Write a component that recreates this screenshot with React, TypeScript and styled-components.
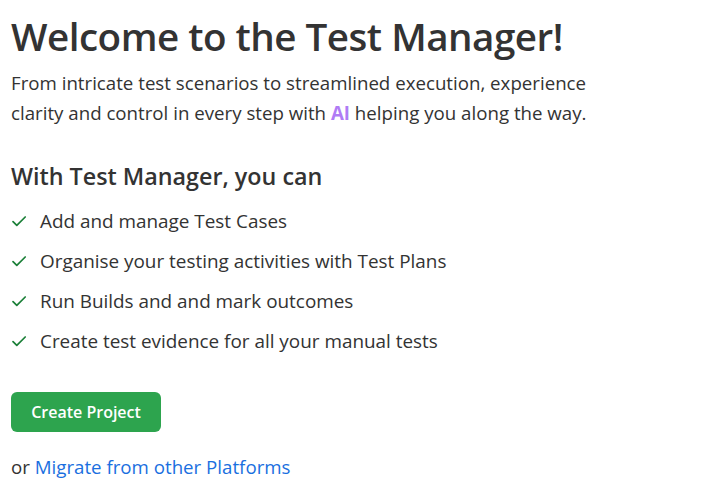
import styled, { createGlobalStyle } from "styled-components";

const GlobalStyle = createGlobalStyle`
  body {
    margin: 0;
    background: #ffffff;
    font-family: "Open Sans", "Noto Sans", sans-serif;
    color: #333333;
  }
`;

const Page = styled.div`
  padding: 10px 11px;
`;

const Title = styled.h1`
  margin: 0;
  font-size: 38.6px;
  font-weight: 600;
  line-height: 52px;
  letter-spacing: -0.5px;
  color: #333333;
`;

const Intro = styled.p`
  margin: 6px 0 0;
  font-size: 18.7px;
  line-height: 30px;
  max-width: 620px;
`;

const Ai = styled.span`
  color: #b07cf5;
  font-weight: 700;
`;

const SubTitle = styled.h2`
  margin: 32px 0 0;
  font-size: 23.3px;
  font-weight: 600;
  line-height: 32px;
`;

const List = styled.ul`
  list-style: none;
  margin: 9px 0 0;
  padding: 0;
`;

const Item = styled.li`
  display: flex;
  align-items: center;
  gap: 13px;
  height: 40px;
  font-size: 18.9px;
`;

const Check = styled.svg`
  width: 16px;
  height: 16px;
  flex: none;
  color: #1a7f37;
`;

const Button = styled.button`
  margin-top: 31px;
  display: block;
  width: 150px;
  height: 40px;
  border: none;
  border-radius: 6px;
  background: #2da44e;
  color: #ffffff;
  font-family: inherit;
  font-size: 16px;
  font-weight: 600;
  cursor: pointer;
`;

const Footer = styled.p`
  margin: 22px 0 0;
  font-size: 18.7px;
`;

const Link = styled.a`
  color: #1a6fe0;
  text-decoration: none;
`;

const items = [
  "Add and manage Test Cases",
  "Organise your testing activities with Test Plans",
  "Run Builds and and mark outcomes",
  "Create test evidence for all your manual tests",
];

const CheckIcon = () => (
  <Check viewBox="0 0 16 16" fill="none">
    <path
      d="M2 8.6l3.8 3.8L14.2 4"
      stroke="currentColor"
      strokeWidth="1.7"
      strokeLinecap="round"
      strokeLinejoin="round"
    />
  </Check>
);

export default function App() {
  return (
    <>
      <GlobalStyle />
      <Page>
        <Title>Welcome to the Test Manager!</Title>
        <Intro>
          From intricate test scenarios to streamlined execution, experience
          clarity and control in every step with <Ai>AI</Ai> helping you along
          the way.
        </Intro>
        <SubTitle>With Test Manager, you can</SubTitle>
        <List>
          {items.map((t) => (
            <Item key={t}>
              <CheckIcon />
              {t}
            </Item>
          ))}
        </List>
        <Button>Create Project</Button>
        <Footer>
          or <Link href="#">Migrate from other Platforms</Link>
        </Footer>
      </Page>
    </>
  );
}
